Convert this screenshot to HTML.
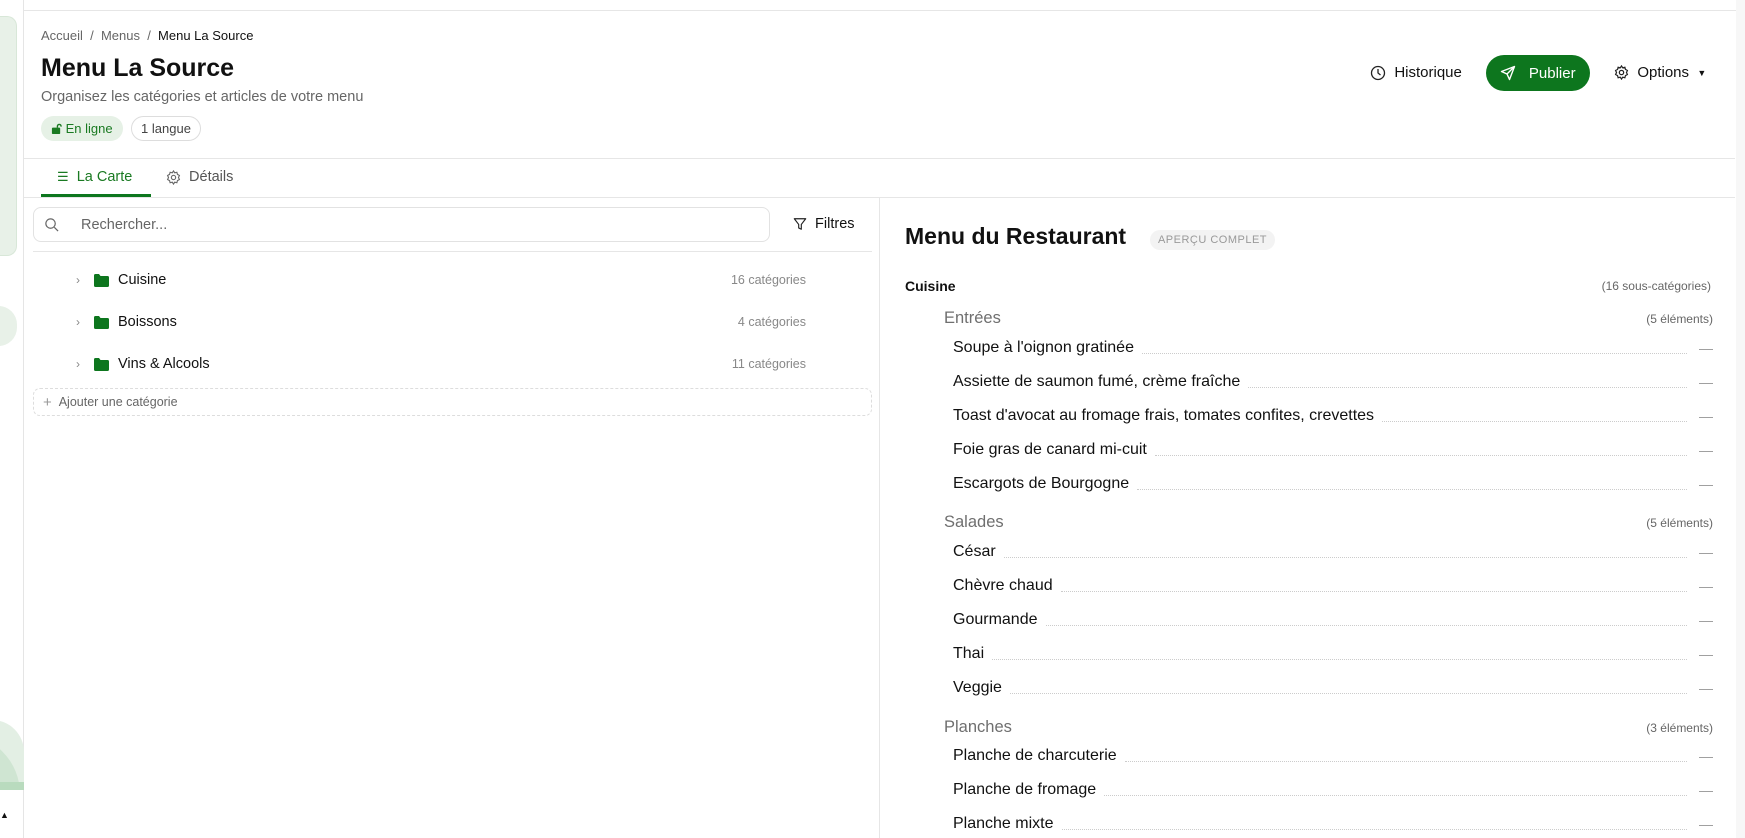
<!DOCTYPE html>
<html><head><meta charset="utf-8"><style>
*{box-sizing:border-box;margin:0;padding:0}
body{width:1745px;height:838px;overflow:hidden;background:#fff;font-family:"Liberation Sans",sans-serif;color:#111;position:relative}
.abs{position:absolute}
.sb{left:0;top:0;width:24px;height:838px;border-right:1px solid #e5e5e5;background:#fff}
.hl{height:1px;background:#e6e6e6}
.row{display:flex;align-items:center}
.item{position:absolute;left:953px;right:32px;height:20px;display:flex;align-items:center;font-size:16px;color:#111}
.item .d{flex:1;border-bottom:1px dotted #ccc;margin:0 12px 0 8px;position:relative;top:5px}
.item .m{color:#999;font-size:14px;width:14px}
.sec{position:absolute;left:944px;right:32px;display:flex;justify-content:space-between;align-items:center}
.sec b{font-weight:normal;font-size:16.5px;color:#6f6f6f}
.sec span{font-size:12px;color:#666}
.cat{position:absolute;left:76px;width:730px;display:flex;align-items:center;font-size:14.5px}
.cat .c{margin-left:auto;font-size:12.5px;color:#888}
</style></head><body>
<div class="abs sb">
 <div class="abs" style="left:0;top:16px;width:17px;height:240px;background:#e8f1e8;border-radius:0 10px 10px 0;border:1px solid #d8e7d8;border-left:none"></div>
 <div class="abs" style="left:-20px;top:306px;width:37px;height:40px;background:#e8f1e8;border-radius:20px"></div>
 <div class="abs" style="left:-40px;top:720px;width:64px;height:70px;background:#e3efe4;border-radius:60px 60px 0 0;overflow:hidden"><div style="position:absolute;left:0;top:14px;width:60px;height:60px;background:#cfe5d2;border-radius:0 60px 0 0"></div><div style="position:absolute;left:0;bottom:0;width:64px;height:8px;background:#b9dbbe"></div></div>
 <div class="abs" style="left:0;top:810px;font-size:9px">▲</div>
</div>
<div class="abs hl" style="left:24px;right:0;top:10px"></div>
<div class="abs" style="left:41px;top:28px;font-size:13px;color:#666">Accueil &nbsp;/&nbsp; Menus &nbsp;/&nbsp; <span style="color:#111">Menu La Source</span></div>
<div class="abs" style="left:41px;top:54px;font-size:25px;font-weight:bold">Menu La Source</div>
<div class="abs" style="left:41px;top:89px;font-size:14.5px;color:#666">Organisez les catégories et articles de votre menu</div>
<div class="abs row" style="left:41px;top:116px;width:82px;height:25px;background:#e6f1e6;border-radius:13px;font-size:13px;color:#1a7a22;padding-left:10px">
<svg width="11" height="11" viewBox="0 0 12 12"><rect x="1" y="5" width="9" height="7" rx="1" fill="#1a7a22"/><path d="M7 5V3.5a2 2 0 0 1 4 0V4" fill="none" stroke="#1a7a22" stroke-width="1.5"/></svg>&nbsp;En ligne</div>
<div class="abs row" style="left:131px;top:116px;width:70px;height:25px;border:1px solid #ddd;border-radius:13px;font-size:13px;color:#444;justify-content:center">1 langue</div>
<div class="abs row" style="left:1370px;top:64px;font-size:15px">
<svg width="16" height="16" viewBox="0 0 16 16" fill="none" stroke="#222" stroke-width="1.3"><circle cx="8" cy="8" r="6.5"/><path d="M8 4v4l2.5 2"/></svg>&nbsp;&nbsp;Historique</div>
<div class="abs row" style="left:1486px;top:55px;width:104px;height:36px;background:#0d761e;border-radius:18px;color:#fff;font-size:15px;justify-content:center">
<svg width="16" height="16" viewBox="0 0 16 16" fill="none" stroke="#fff" stroke-width="1.4" stroke-linejoin="round"><path d="M14.5 1.5L1.5 6.5l5.5 2.5 2.5 5.5z M7 9l7.5-7.5"/></svg>&nbsp;&nbsp;&nbsp;Publier</div>
<div class="abs row" style="left:1614px;top:64px;font-size:15px">
<svg width="15" height="15" viewBox="0 0 16 16" fill="none" stroke="#222" stroke-width="1.3"><circle cx="8" cy="8" r="2.3"/><path d="M8 1l1.3 2 2.3-.6.6 2.3 2.1 1.2-1 2.1 1 2.1-2.1 1.2-.6 2.3-2.3-.6L8 15l-1.3-2-2.3.6-.6-2.3-2.1-1.2 1-2.1-1-2.1 2.1-1.2.6-2.3 2.3.6z"/></svg>&nbsp;&nbsp;Options&nbsp;&nbsp;<span style="font-size:9px">▼</span></div>
<div class="abs" style="right:0;top:0;width:9px;height:838px;background:#f7f7f7"></div>
<div class="abs hl" style="left:24px;right:10px;top:158px"></div>
<div class="abs row" style="left:57px;top:169px;font-size:14.5px;color:#1a7a22"><span style="font-size:13px">☰</span>&nbsp;&nbsp;La Carte</div>
<div class="abs row" style="left:166px;top:169px;font-size:14.5px;color:#555"><svg width="15" height="15" viewBox="0 0 16 16" fill="none" stroke="#666" stroke-width="1.2"><circle cx="8" cy="8" r="2.3"/><path d="M8 1l1.3 2 2.3-.6.6 2.3 2.1 1.2-1 2.1 1 2.1-2.1 1.2-.6 2.3-2.3-.6L8 15l-1.3-2-2.3.6-.6-2.3-2.1-1.2 1-2.1-1-2.1 2.1-1.2.6-2.3 2.3.6z"/></svg>&nbsp;&nbsp;Détails</div>
<div class="abs" style="left:41px;top:194px;width:110px;height:3px;background:#0d761e"></div>
<div class="abs hl" style="left:24px;right:10px;top:197px"></div>
<div class="abs" style="left:879px;top:197px;width:1px;height:641px;background:#e6e6e6"></div>
<div class="abs row" style="left:33px;top:207px;width:737px;height:35px;border:1px solid #e2e2e2;border-radius:8px;background:#fff;font-size:14.5px;color:#666;padding-left:10px">
<svg width="15" height="15" viewBox="0 0 16 16" fill="none" stroke="#666" stroke-width="1.3"><circle cx="7" cy="7" r="5"/><path d="M11 11l4 4"/></svg><span style="margin-left:22px">Rechercher...</span></div>
<div class="abs row" style="left:793px;top:216px;font-size:14.5px"><svg width="14" height="14" viewBox="0 0 16 16" fill="none" stroke="#222" stroke-width="1.3" stroke-linejoin="round"><path d="M1.5 2h13l-5 6.5V14l-3-1.5V8.5z"/></svg>&nbsp;&nbsp;Filtres</div>
<div class="abs hl" style="left:33px;top:251px;width:839px"></div>
<div class="cat" style="top:272px"><span style="color:#888;font-size:12px">›</span><svg style="margin-left:14px" width="15" height="13" viewBox="0 0 15 13"><path d="M0 1.5Q0 0 1.5 0H5l1.5 2H13.5Q15 2 15 3.5V11.5Q15 13 13.5 13H1.5Q0 13 0 11.5z" fill="#0d761e"/></svg><span style="margin-left:9px">Cuisine</span><span class="c">16 catégories</span></div>
<div class="cat" style="top:314px"><span style="color:#888;font-size:12px">›</span><svg style="margin-left:14px" width="15" height="13" viewBox="0 0 15 13"><path d="M0 1.5Q0 0 1.5 0H5l1.5 2H13.5Q15 2 15 3.5V11.5Q15 13 13.5 13H1.5Q0 13 0 11.5z" fill="#0d761e"/></svg><span style="margin-left:9px">Boissons</span><span class="c">4 catégories</span></div>
<div class="cat" style="top:356px"><span style="color:#888;font-size:12px">›</span><svg style="margin-left:14px" width="15" height="13" viewBox="0 0 15 13"><path d="M0 1.5Q0 0 1.5 0H5l1.5 2H13.5Q15 2 15 3.5V11.5Q15 13 13.5 13H1.5Q0 13 0 11.5z" fill="#0d761e"/></svg><span style="margin-left:9px">Vins &amp; Alcools</span><span class="c">11 catégories</span></div>
<div class="abs row" style="left:33px;top:388px;width:839px;height:28px;border:1px dashed #ddd;border-radius:7px;font-size:12.5px;color:#666;padding-left:9px"><span style="font-size:15px;color:#999">+</span>&nbsp;&nbsp;Ajouter une catégorie</div>

<div class="abs" style="left:905px;top:223px;font-size:23px;font-weight:bold">Menu du Restaurant</div>
<div class="abs row" style="left:1150px;top:230px;width:125px;height:20px;background:#f3f3f3;border-radius:10px;font-size:11px;color:#999;justify-content:center;letter-spacing:.5px">APERÇU COMPLET</div>
<div class="abs" style="left:905px;top:278px;width:806px;display:flex;justify-content:space-between;align-items:center"><b style="font-size:14px">Cuisine</b><span style="font-size:12px;color:#666">(16 sous-catégories)</span></div>
<div class="sec" style="top:309px"><b>Entrées</b><span>(5 éléments)</span></div>
<div class="item" style="top:338px">Soupe à l'oignon gratinée<span class="d"></span><span class="m">—</span></div>
<div class="item" style="top:372px">Assiette de saumon fumé, crème fraîche<span class="d"></span><span class="m">—</span></div>
<div class="item" style="top:406px">Toast d'avocat au fromage frais, tomates confites, crevettes<span class="d"></span><span class="m">—</span></div>
<div class="item" style="top:440px">Foie gras de canard mi-cuit<span class="d"></span><span class="m">—</span></div>
<div class="item" style="top:474px">Escargots de Bourgogne<span class="d"></span><span class="m">—</span></div>
<div class="sec" style="top:513px"><b>Salades</b><span>(5 éléments)</span></div>
<div class="item" style="top:542px">César<span class="d"></span><span class="m">—</span></div>
<div class="item" style="top:576px">Chèvre chaud<span class="d"></span><span class="m">—</span></div>
<div class="item" style="top:610px">Gourmande<span class="d"></span><span class="m">—</span></div>
<div class="item" style="top:644px">Thai<span class="d"></span><span class="m">—</span></div>
<div class="item" style="top:678px">Veggie<span class="d"></span><span class="m">—</span></div>
<div class="sec" style="top:718px"><b>Planches</b><span>(3 éléments)</span></div>
<div class="item" style="top:746px">Planche de charcuterie<span class="d"></span><span class="m">—</span></div>
<div class="item" style="top:780px">Planche de fromage<span class="d"></span><span class="m">—</span></div>
<div class="item" style="top:814px">Planche mixte<span class="d"></span><span class="m">—</span></div>
</body></html>
